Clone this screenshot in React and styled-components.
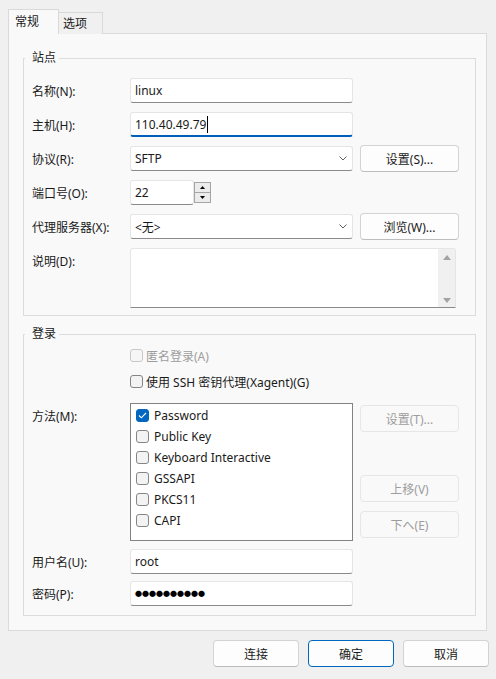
import React from 'react';
import styled, { createGlobalStyle, css } from 'styled-components';

const GlobalStyle = createGlobalStyle`
  html, body { margin: 0; padding: 0; background: #f0f0f0; }
  body {
    font-family: "Noto Sans", "Noto Sans CJK SC", sans-serif;
    font-size: 12px;
    color: #1a1a1a;
  }
  * { box-sizing: border-box; }
`;

const Window = styled.div`
  width: 496px;
  height: 679px;
  background: #f0f0f0;
  padding: 9px 9px 0 8px;
  display: flex;
  flex-direction: column;
`;

const TabBar = styled.div`
  display: flex;
  align-items: flex-end;
  height: 25px;
  margin-bottom: -1px;
  position: relative;
  z-index: 1;
`;

const Tab = styled.div`
  display: flex;
  align-items: center;
  border: 1px solid #d9d9d9;
  border-bottom: none;
  line-height: 16px;
  ${(p) =>
    p.$active
      ? css`
          width: 51px;
          height: 25px;
          padding-left: 6px;
          background: #f9f9f9;
        `
      : css`
          width: 44px;
          height: 22px;
          padding-left: 4px;
          border-left: none;
          background: #f0f0f0;
        `}
`;

const Panel = styled.div`
  width: 479px;
  height: 598px;
  border: 1px solid #dadada;
  background: #f9f9f9;
  padding: 16px 10px 14px 14px;
  display: flex;
  flex-direction: column;
  gap: 10px;
`;

const Group = styled.fieldset`
  margin: 0;
  min-width: 0;
  border: 1px solid #dcdcdc;
  padding: 0 10px ${(p) => p.$padBottom}px 8px;
`;

const Legend = styled.legend`
  margin-left: -7px;
  padding: 0 3px 0 7px;
  line-height: 16px;
  color: #1a1a1a;
`;

const Rows = styled.div`
  display: flex;
  flex-direction: column;
  padding-top: ${(p) => p.$padTop}px;
`;

const Row = styled.div`
  display: grid;
  grid-template-columns: 91px 223px 99px;
  column-gap: 7px;
  align-items: center;
  margin-top: ${(p) => p.$mt || 0}px;
  min-height: ${(p) => p.$h || 25}px;
`;

const Label = styled.div`
  grid-column: 1;
  align-self: start;
  height: 25px;
  display: flex;
  align-items: center;
  white-space: nowrap;
`;

const fieldBase = css`
  height: 25px;
  background: #fff;
  border: 1px solid #e5e5e5;
  border-bottom-color: #8a8a8a;
  border-radius: 3px;
  padding: 0 4px;
  display: flex;
  align-items: center;
  white-space: nowrap;
`;

const TextBox = styled.div`
  ${fieldBase}
  grid-column: 2;
  ${(p) =>
    p.$focused &&
    css`
      border-bottom: 2px solid #005fb8;
    `}
`;

const Caret = styled.span`
  display: inline-block;
  width: 1px;
  height: 17px;
  background: #000;
  margin-left: 1px;
`;

const Combo = styled.div`
  ${fieldBase}
  grid-column: 2;
  justify-content: space-between;
  padding-right: 5px;
`;

const Chevron = () => (
  <svg width="8" height="5" viewBox="0 0 8 5">
    <polyline points="0.5,0.5 4,4 7.5,0.5" fill="none" stroke="#5f5f5f" strokeWidth="1" />
  </svg>
);

const SpinWrap = styled.div`
  grid-column: 2;
  display: flex;
  align-items: center;
`;

const SpinInput = styled.div`
  ${fieldBase}
  width: 64px;
`;

const SpinButtons = styled.div`
  width: 17px;
  height: 21px;
  border: 1px solid #a5a5a5;
  background: #ececec;
  display: flex;
  flex-direction: column;
`;

const SpinHalf = styled.div`
  flex: 1;
  display: flex;
  align-items: center;
  justify-content: center;
  ${(p) => p.$top && css`border-bottom: 1px solid #a5a5a5;`}
`;

const Tri = ({ up, w = 5, h = 3, color = '#000' }) => (
  <svg width={w} height={h} viewBox={`0 0 ${w} ${h}`}>
    <polygon
      points={up ? `0,${h} ${w / 2},0 ${w},${h}` : `0,0 ${w / 2},${h} ${w},0`}
      fill={color}
    />
  </svg>
);

const TextArea = styled.div`
  grid-column: 2 / 4;
  justify-self: start;
  width: 326px;
  height: 60px;
  background: #fff;
  border: 1px solid #e5e5e5;
  border-bottom-color: #8a8a8a;
  border-radius: 3px 3px 0 0;
  display: flex;
  justify-content: flex-end;
`;

const ScrollBar = styled.div`
  width: 17px;
  height: 100%;
  background: #f0f0f0;
  display: flex;
  flex-direction: column;
  justify-content: space-between;
  align-items: center;
  padding: 6px 0 4px;
`;

const Button = styled.button`
  grid-column: 3;
  width: ${(p) => p.$w || 99}px;
  height: 27px;
  margin: -1px 0;
  font: inherit;
  color: #1a1a1a;
  background: #fdfdfd;
  border: 1px solid #d3d3d3;
  border-bottom-color: #bdbdbd;
  border-radius: 4px;
  padding: 0;
  display: flex;
  align-items: center;
  justify-content: center;
  ${(p) =>
    p.$primary &&
    css`
      border: 1px solid #0067c0;
    `}
  ${(p) =>
    p.disabled &&
    css`
      background: #f9f9f9;
      border: 1px solid #e6e6e6;
      color: #9d9d9d;
    `}
`;

const CheckRow = styled.div`
  grid-column: 2 / 4;
  display: flex;
  align-items: center;
  gap: 3px;
  height: 19px;
  white-space: nowrap;
  color: ${(p) => (p.$disabled ? '#9d9d9d' : '#1a1a1a')};
`;

const Box = styled.span`
  width: 13px;
  height: 13px;
  flex: none;
  border-radius: 3px;
  border: 1px solid ${(p) => (p.$disabled ? '#c8c8c8' : '#858585')};
  background: ${(p) => (p.$disabled ? '#f6f6f6' : '#f3f3f3')};
  display: flex;
  align-items: center;
  justify-content: center;
  ${(p) =>
    p.$checked &&
    css`
      background: #0067c0;
      border-color: #0067c0;
    `}
`;

const Check = ({ checked, disabled }) => (
  <Box $checked={checked} $disabled={disabled}>
    {checked && (
      <svg width="9" height="7" viewBox="0 0 9 7">
        <polyline points="1,3.5 3.3,5.8 8,1" fill="none" stroke="#fff" strokeWidth="1.1" />
      </svg>
    )}
  </Box>
);

const MethodList = styled.div`
  grid-column: 2;
  align-self: start;
  height: 138px;
  background: #fff;
  border: 1px solid #828282;
  padding: 1px 0 0 5px;
  display: flex;
  flex-direction: column;
`;

const MethodItem = styled.div`
  height: 21px;
  display: flex;
  align-items: center;
  gap: 5px;
  white-space: nowrap;
`;

const SideButtons = styled.div`
  grid-column: 3;
  align-self: start;
  display: flex;
  flex-direction: column;
  padding-top: 2px;
`;

const SideButton = styled(Button)`
  margin: ${(p) => p.$mt || 0}px 0 0;
`;

const Dots = styled.span`
  font-family: "Noto Sans CJK SC", sans-serif;
  font-size: 7px;
  letter-spacing: 0;
  color: #000;
  line-height: 1;
`;

const BottomBar = styled.div`
  display: flex;
  justify-content: flex-end;
  gap: 9px;
  margin: 10px -2px 0 0;
`;

const methods = [
  { name: 'Password', checked: true },
  { name: 'Public Key' },
  { name: 'Keyboard Interactive' },
  { name: 'GSSAPI' },
  { name: 'PKCS11' },
  { name: 'CAPI' },
];

export default function App() {
  return (
    <>
      <GlobalStyle />
      <Window>
        <TabBar>
          <Tab $active>常规</Tab>
          <Tab>选项</Tab>
        </TabBar>
        <Panel>
          <Group $padBottom={7}>
            <Legend>站点</Legend>
            <Rows $padTop={12}>
              <Row>
                <Label>名称(N):</Label>
                <TextBox>linux</TextBox>
              </Row>
              <Row $mt={9}>
                <Label>主机(H):</Label>
                <TextBox $focused>
                  110.40.49.79
                  <Caret />
                </TextBox>
              </Row>
              <Row $mt={9}>
                <Label>协议(R):</Label>
                <Combo>
                  <span>SFTP</span>
                  <Chevron />
                </Combo>
                <Button>设置(S)...</Button>
              </Row>
              <Row $mt={9}>
                <Label>端口号(O):</Label>
                <SpinWrap>
                  <SpinInput>22</SpinInput>
                  <SpinButtons>
                    <SpinHalf $top>
                      <Tri up />
                    </SpinHalf>
                    <SpinHalf>
                      <Tri />
                    </SpinHalf>
                  </SpinButtons>
                </SpinWrap>
              </Row>
              <Row $mt={9}>
                <Label>代理服务器(X):</Label>
                <Combo>
                  <span>&lt;无&gt;</span>
                  <Chevron />
                </Combo>
                <Button>浏览(W)...</Button>
              </Row>
              <Row $mt={9} $h={60}>
                <Label>说明(D):</Label>
                <TextArea>
                  <ScrollBar>
                    <Tri up w={8} h={5} color="#a3a3a3" />
                    <Tri w={8} h={5} color="#a3a3a3" />
                  </ScrollBar>
                </TextArea>
              </Row>
            </Rows>
          </Group>

          <Group $padBottom={9}>
            <Legend>登录</Legend>
            <Rows $padTop={4}>
              <Row $h={19}>
                <CheckRow $disabled>
                  <Check disabled />
                  匿名登录(A)
                </CheckRow>
              </Row>
              <Row $h={19} $mt={7}>
                <CheckRow>
                  <Check />
                  使用 SSH 密钥代理(Xagent)(G)
                </CheckRow>
              </Row>
              <Row $h={138} $mt={12}>
                <Label>方法(M):</Label>
                <MethodList>
                  {methods.map((m) => (
                    <MethodItem key={m.name}>
                      <Check checked={m.checked} />
                      {m.name}
                    </MethodItem>
                  ))}
                </MethodList>
                <SideButtons>
                  <SideButton disabled>设置(T)...</SideButton>
                  <SideButton disabled $mt={43}>上移(V)</SideButton>
                  <SideButton disabled $mt={9}>下へ(E)</SideButton>
                </SideButtons>
              </Row>
              <Row $mt={8}>
                <Label>用户名(U):</Label>
                <TextBox>root</TextBox>
              </Row>
              <Row $mt={7}>
                <Label>密码(P):</Label>
                <TextBox>
                  <Dots>●●●●●●●●●●</Dots>
                </TextBox>
              </Row>
            </Rows>
          </Group>
        </Panel>
        <BottomBar>
          <Button $w={86}>连接</Button>
          <Button $w={86} $primary>
            确定
          </Button>
          <Button $w={86}>取消</Button>
        </BottomBar>
      </Window>
    </>
  );
}
